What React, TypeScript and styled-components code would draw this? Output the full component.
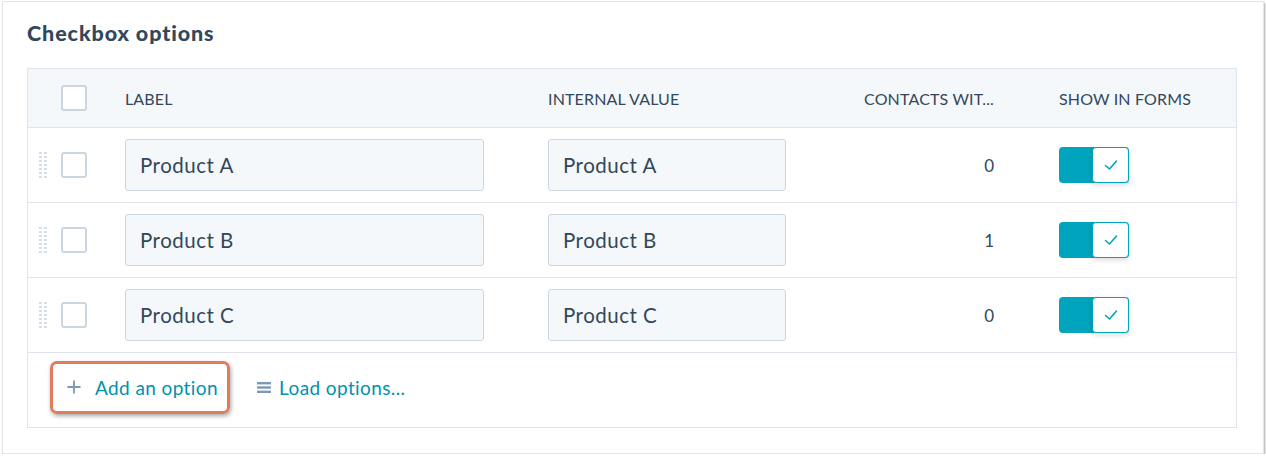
import { createGlobalStyle } from "styled-components";
import styled from "styled-components";

// 全局样式
const GlobalStyle = createGlobalStyle`
  html, body {
    margin: 0;
    padding: 0;
    background: #ffffff;
  }
  body {
    font-family: Lato, "Open Sans", "Liberation Sans", sans-serif;
    color: #33475b;
  }
`;

const Frame = styled.div`
  box-sizing: border-box;
  margin: 1px 0 0 2px;
  width: 1262px;
  height: 453px;
  border: 1px solid #e6e6e6;
  box-shadow: 1px 2px 2px rgba(0, 0, 0, 0.35);
  background: #fff;
  padding: 19px 0 0 24px;
`;

const Title = styled.h2`
  margin: 0 0 23px 0;
  font-size: 21.5px;
  font-weight: 900;
  letter-spacing: 0.9px;
  line-height: 24px;
  color: #33475b;
`;

const Table = styled.div`
  box-sizing: border-box;
  width: 1210px;
  border: 1px solid #dfe3eb;
`;

const Row = styled.div<{ $header?: boolean }>`
  display: grid;
  grid-template-columns: 97px 423px 312px 134px 1fr;
  align-items: center;
  height: ${p => (p.$header ? "58px" : "74px")};
  background: ${p => (p.$header ? "#f5f8fa" : "#fff")};
  border-bottom: 1px solid #dfe3eb;
`;

const LeadCell = styled.div`
  display: flex;
  align-items: center;
  padding-left: 11px;
  gap: 14px;
`;

const HeadText = styled.div<{ $right?: boolean }>`
  font-size: 16px;
  text-transform: uppercase;
  color: #33475b;
  letter-spacing: 0.15px;
  text-align: ${p => (p.$right ? "right" : "left")};
  white-space: nowrap;
`;

const Handle = styled.div<{ $hidden?: boolean }>`
  display: grid;
  grid-template-columns: 3px 3px;
  column-gap: 2px;
  row-gap: 2px;
  visibility: ${p => (p.$hidden ? "hidden" : "visible")};
  & > span {
    width: 3px;
    height: 2px;
    background: #d5dee8;
  }
`;

const Box = styled.div`
  box-sizing: border-box;
  width: 26px;
  height: 26px;
  border: 2px solid #cbd6e2;
  border-radius: 3px;
  background: #fff;
`;

const Input = styled.div<{ $w: number }>`
  box-sizing: border-box;
  width: ${p => p.$w}px;
  height: 52px;
  border: 1px solid #cbd6e2;
  border-radius: 3px;
  background: #f5f8fa;
  padding-left: 14px;
  display: flex;
  align-items: center;
  font-size: 20.5px;
  letter-spacing: 0.5px;
  color: #33475b;
`;

const Count = styled.div`
  text-align: right;
  font-size: 17px;
  color: #33475b;
`;

const ToggleCell = styled.div`
  padding-left: 65px;
`;

const Toggle = styled.div`
  position: relative;
  width: 70px;
  height: 36px;
  border-radius: 4px;
  background: #00a4bd;
`;

const Knob = styled.div`
  position: absolute;
  right: 0;
  top: 0;
  box-sizing: border-box;
  width: 37px;
  height: 36px;
  border: 1px solid #00a4bd;
  border-radius: 4px;
  background: #fff;
  box-shadow: 0 2px 5px rgba(0, 0, 0, 0.15);
  display: flex;
  align-items: center;
  justify-content: center;
`;

const Footer = styled.div`
  box-sizing: border-box;
  height: 74px;
  display: flex;
  align-items: center;
  padding: 0 0 6px 22px;
  gap: 27px;
`;

const HighlightButton = styled.div`
  box-sizing: border-box;
  height: 53px;
  width: 180px;
  border: 3px solid #e07b5b;
  border-radius: 7px;
  box-shadow: 1px 2px 4px rgba(0, 0, 0, 0.35);
  display: flex;
  align-items: center;
  padding-left: 14px;
  gap: 14px;
`;

const LinkText = styled.span`
  font-size: 19px;
  letter-spacing: 0.4px;
  color: #0091ae;
`;

const LinkRow = styled.div`
  display: flex;
  align-items: center;
  gap: 8px;
`;

const DragHandle = ({ hidden }: { hidden?: boolean }) => (
  <Handle $hidden={hidden}>
    {Array.from({ length: 14 }).map((_, i) => <span key={i} />)}
  </Handle>
);

const rows = [
  { label: "Product A", value: "Product A", count: 0 },
  { label: "Product B", value: "Product B", count: 1 },
  { label: "Product C", value: "Product C", count: 0 },
];

export default function App() {
  return (
    <>
      <GlobalStyle />
      <Frame>
        <Title>Checkbox options</Title>
        <Table>
          <Row $header>
            <LeadCell>
              <DragHandle hidden />
              <Box />
            </LeadCell>
            <HeadText>Label</HeadText>
            <HeadText>Internal value</HeadText>
            <HeadText $right>CONTACTS WIT...</HeadText>
            <ToggleCell>
              <HeadText>Show in forms</HeadText>
            </ToggleCell>
          </Row>
          {rows.map(r => (
            <Row key={r.label}>
              <LeadCell>
                <DragHandle />
                <Box />
              </LeadCell>
              <Input $w={359}>{r.label}</Input>
              <Input $w={238}>{r.value}</Input>
              <Count>{r.count}</Count>
              <ToggleCell>
                <Toggle>
                  <Knob>
                    <svg width="14" height="12" viewBox="0 0 14 12" fill="none">
                      <path d="M1.5 6.5 L5.5 10 L12.5 2" stroke="#00a4bd" strokeWidth="1.6" strokeLinecap="round" strokeLinejoin="round" />
                    </svg>
                  </Knob>
                </Toggle>
              </ToggleCell>
            </Row>
          ))}
          <Footer>
            <HighlightButton>
              <svg width="14" height="14" viewBox="0 0 14 14">
                <path d="M7 0.5 V13.5 M0.5 7 H13.5" stroke="#7c98b6" strokeWidth="1.8" />
              </svg>
              <LinkText>Add an option</LinkText>
            </HighlightButton>
            <LinkRow>
              <svg width="14" height="13" viewBox="0 0 14 13">
                <rect x="0" y="1" width="14" height="2.4" fill="#7c98b6" />
                <rect x="0" y="5.3" width="14" height="2.4" fill="#7c98b6" />
                <rect x="0" y="9.6" width="14" height="2.4" fill="#7c98b6" />
              </svg>
              <LinkText>Load options...</LinkText>
            </LinkRow>
          </Footer>
        </Table>
      </Frame>
    </>
  );
}
